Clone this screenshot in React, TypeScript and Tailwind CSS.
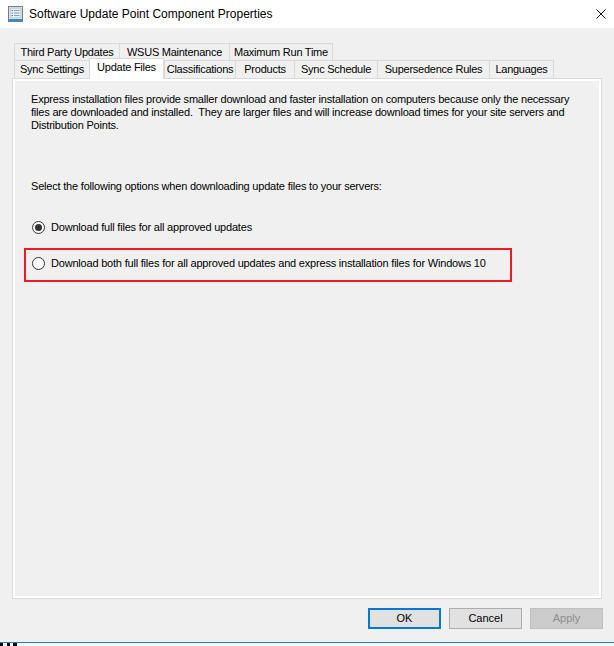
import React from 'react';

const row1 = [
  { label: 'Third Party Updates', w: 'w-[105px]' },
  { label: 'WSUS Maintenance', w: 'w-[110px]' },
  { label: 'Maximum Run Time', w: 'w-[104px] border-r' },
];

const row2 = [
  { label: 'Sync Settings', w: 'w-[75px]' },
  { label: 'Update Files', w: 'w-[75px]', active: true },
  { label: 'Classifications', w: 'w-[71px]' },
  { label: 'Products', w: 'w-[59px]' },
  { label: 'Sync Schedule', w: 'w-[83px]' },
  { label: 'Supersedence Rules', w: 'w-[112px]' },
  { label: 'Languages', w: 'w-[65px] border-r' },
];

const Radio: React.FC<{ checked?: boolean }> = ({ checked }) => (
  <span className="w-[13px] h-[13px] rounded-full border border-[#333333] bg-white flex items-center justify-center shrink-0">
    {checked && <span className="w-[7px] h-[7px] rounded-full bg-[#333333]"></span>}
  </span>
);

const App: React.FC = () => {
  return (
    <div className="w-[614px] h-[646px] bg-[#f0f0f0] flex flex-col font-['Liberation_Sans',Arial,sans-serif] text-black overflow-hidden">
      {/* title bar */}
      <div className="h-[28px] bg-white flex items-center shrink-0">
        <svg className="ml-[8px]" width="15" height="16" viewBox="0 0 15 16">
          <rect x="0.5" y="0.5" width="14" height="15" fill="#f4f8fb" stroke="#7d7d7d" />
          <rect x="2" y="2" width="11" height="10" fill="#e3eef7" stroke="#9bb4c8" strokeWidth="0.8" />
          <rect x="3.5" y="4" width="1.5" height="1" fill="#4a8ac4" />
          <rect x="6" y="4" width="5.5" height="1" fill="#8aa2b6" />
          <rect x="3.5" y="6.5" width="1.5" height="1" fill="#4a8ac4" />
          <rect x="6" y="6.5" width="5.5" height="1" fill="#8aa2b6" />
          <rect x="3.5" y="9" width="1.5" height="1" fill="#4a8ac4" />
          <rect x="6" y="9" width="5.5" height="1" fill="#8aa2b6" />
          <rect x="1" y="13" width="13" height="2" fill="#2b8fd8" />
        </svg>
        <span className="ml-[6px] text-[12px] leading-none">Software Update Point Component Properties</span>
        <svg className="ml-auto mr-[8px]" width="10" height="10" viewBox="0 0 10 10">
          <path d="M0.5 0.5 L9.5 9.5 M9.5 0.5 L0.5 9.5" stroke="#111" strokeWidth="1" />
        </svg>
      </div>

      {/* tabs + panel */}
      <div className="px-[12px] pt-[15px] flex flex-col">
        <div className="flex ml-[2px] h-[17px] text-[11px] tracking-[-0.25px]">
          {row1.map((t) => (
            <div key={t.label} className={`${t.w} h-full border-t border-l border-[#d9d9d9] flex items-center justify-center`}>
              {t.label}
            </div>
          ))}
        </div>
        <div className="flex items-start ml-[2px] h-[18px] text-[11px] tracking-[-0.25px]">
          {row2.map((t) =>
            t.active ? (
              <div
                key={t.label}
                className={`${t.w} -mt-[2px] h-[21px] pb-[3px] relative z-10 bg-white border-t border-l border-r border-[#d9d9d9] flex items-center justify-center`}
              >
                {t.label}
              </div>
            ) : (
              <div key={t.label} className={`${t.w} h-full border-t border-l border-[#d9d9d9] flex items-center justify-center`}>
                {t.label}
              </div>
            )
          )}
        </div>

        <div className="h-[521px] border border-[#d9d9d9] bg-white p-[2px]">
          <div className="h-full bg-[#f0f0f0] pl-[16px] pt-[12px] text-[11px] leading-[13px] tracking-[-0.2px]">
            <p>
              Express installation files provide smaller download and faster installation on computers because only the necessary
              <br />
              files are downloaded and installed.&nbsp; They are larger files and will increase download times for your site servers and
              <br />
              Distribution Points.
            </p>

            <p className="mt-[48px]">Select the following options when downloading update files to your servers:</p>

            <div className="mt-[26px] h-[17px] flex items-center gap-[6px] pl-[1px]">
              <Radio checked />
              <span>Download full files for all approved updates</span>
            </div>

            <div className="mt-[12px] -ml-[7px] w-[488px] h-[34px] border-2 border-[#ec1c24] flex items-center gap-[6px] pl-[6px] pb-[3px]">
              <Radio />
              <span>Download both full files for all approved updates and express installation files for Windows 10</span>
            </div>
          </div>
        </div>
      </div>

      {/* buttons */}
      <div className="flex justify-end gap-[8px] pr-[11px] mt-[9px] text-[11px]">
        <button className="w-[73px] h-[21px] bg-[#e1e1e1] border-2 border-[#0078d7] flex items-center justify-center">OK</button>
        <button className="w-[73px] h-[21px] bg-[#e1e1e1] border border-[#adadad] flex items-center justify-center">Cancel</button>
        <button className="w-[73px] h-[21px] bg-[#cccccc] border border-[#bfbfbf] text-[#8d8d8d] flex items-center justify-center">Apply</button>
      </div>

      <div className="mt-auto h-[1px] bg-[#1883d7]"></div>
      <div className="h-[3px] bg-white flex">
        <span className="w-[3px] h-full bg-black"></span>
        <span className="w-[4px] h-full"></span>
        <span className="w-[3px] h-full bg-black"></span>
        <span className="w-[3px] h-full"></span>
        <span className="w-[4px] h-full bg-black"></span>
      </div>
    </div>
  );
};

export default App;
